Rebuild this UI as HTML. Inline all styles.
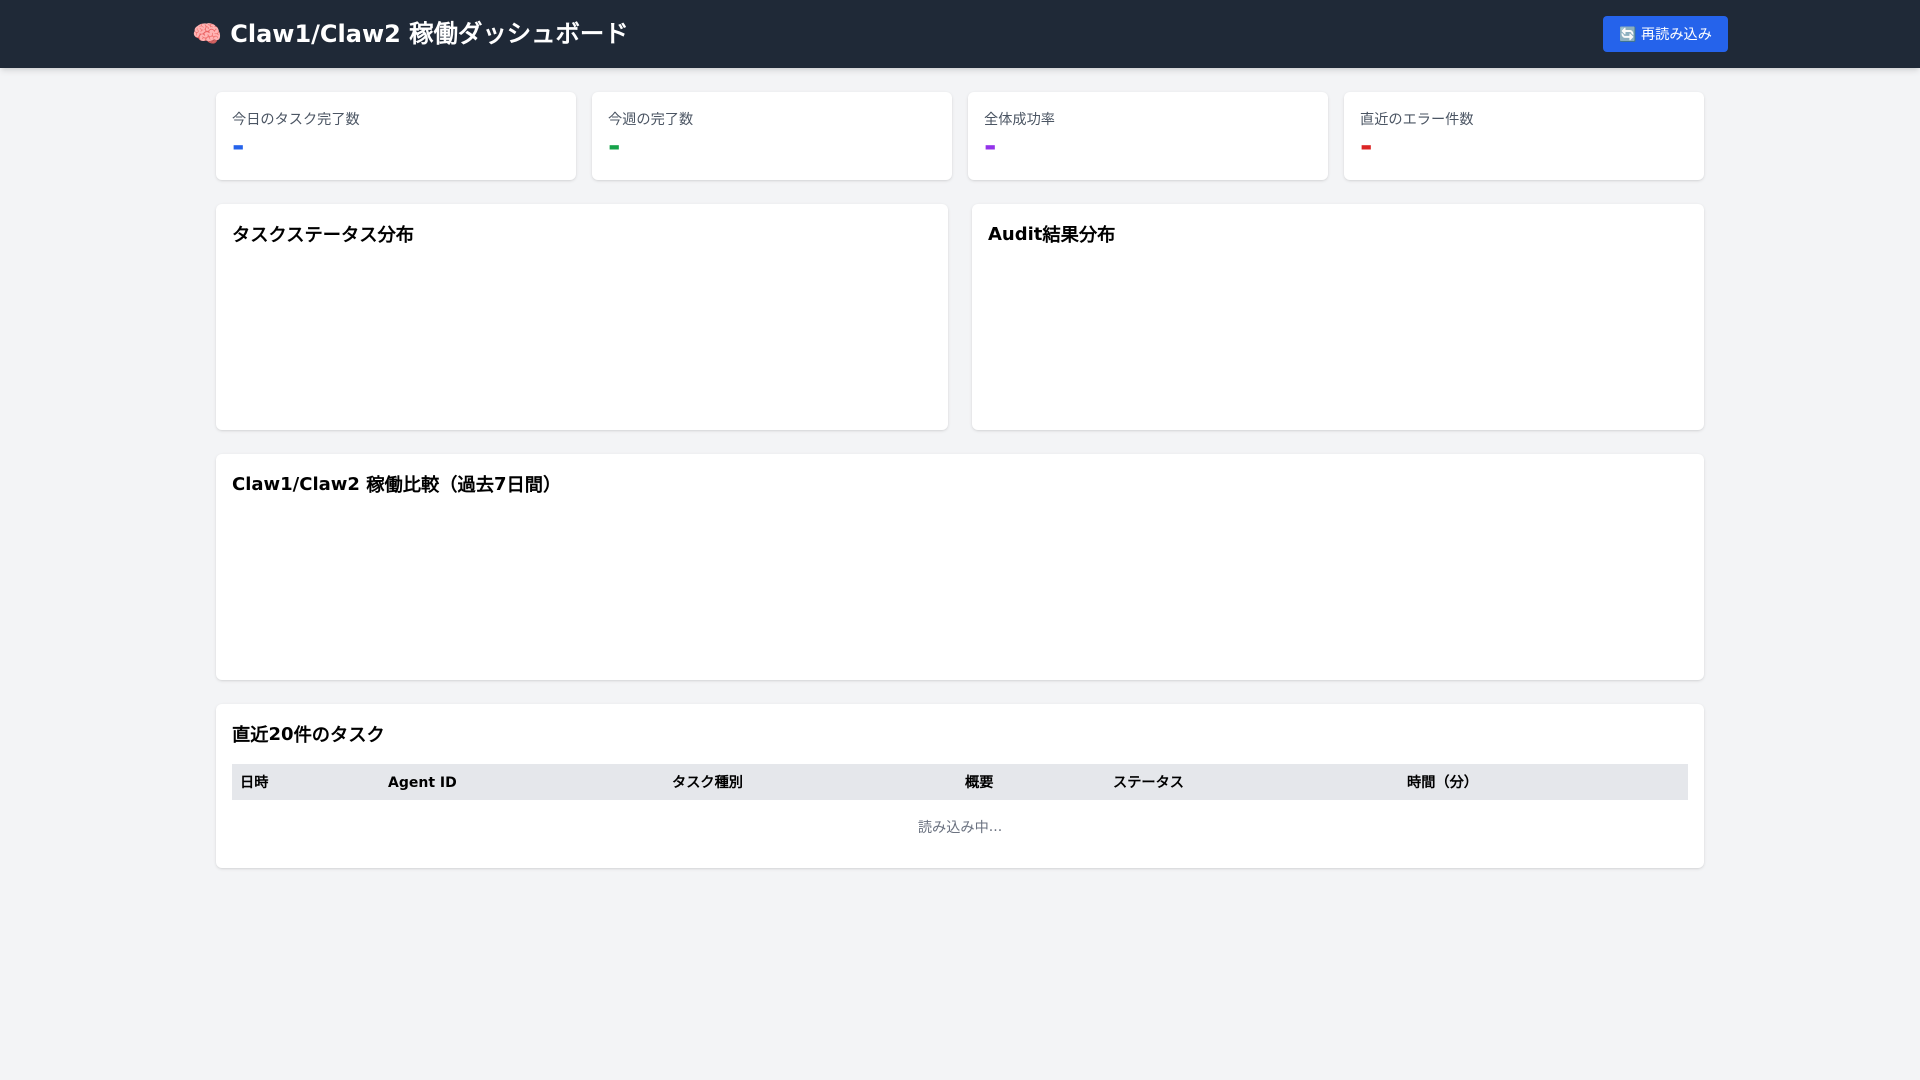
<!DOCTYPE html>
<html lang="ja">
<head>
<meta charset="utf-8">
<title>Claw1/Claw2 稼働ダッシュボード</title>
<style>
*{box-sizing:border-box;margin:0;padding:0}
html,body{width:1920px;height:1080px;overflow:hidden}
body{background:#f3f4f6;font-family:"DejaVu Sans","WenQuanYi Zen Hei",sans-serif;line-height:1.5;color:#000;position:relative}
i{font-style:normal;font-size:1.014em}
h1 i{font-size:1.017em}
p i,h2 i,td i{position:relative;top:1px}
header{position:absolute;left:0;top:0;width:1920px;height:68px;background:#1f2937;color:#fff;box-shadow:0 4px 6px -1px rgba(0,0,0,.1),0 2px 4px -2px rgba(0,0,0,.1)}
h1{position:absolute;left:192px;top:16px;font-size:24px;line-height:36px;font-weight:700;white-space:nowrap}
.btn{position:absolute;left:1603px;top:16px;width:125px;height:36px;background:#2563eb;color:#fff;border-radius:4px;font-size:14px;line-height:36px;padding-top:1px;text-align:center;white-space:nowrap}
.card{position:absolute;background:#fff;border-radius:6px;box-shadow:0 1px 3px 0 rgba(0,0,0,.1),0 1px 2px -1px rgba(0,0,0,.1)}
.stat{top:92px;width:360px;height:88px;padding:16px}
.stat p{font-size:14px;line-height:20px;color:#4b5563;position:relative;top:1px}
.stat b{display:block;font-size:30px;line-height:36px;font-weight:700;position:relative;top:1px}
.panel{padding:16px}
h2{font-size:18px;line-height:28px;font-weight:700;white-space:nowrap;position:relative;top:1px}
table{position:absolute;left:16px;top:60px;width:1456px;border-collapse:collapse;table-layout:fixed;font-size:14px}
th{background:#e5e7eb;height:36px;padding:9px 8px 7px;text-align:left;font-weight:700;line-height:20px}
td{padding:17px 8px 15px;text-align:center;color:#6b7280;line-height:20px}
</style>
</head>
<body>
<header>
<h1>🧠 Claw1/Claw2 <i>稼働ダッシュボード</i></h1>
<div class="btn">🔄 <i>再読み込み</i></div>
</header>
<div class="card stat" style="left:216px"><p><i>今日のタスク完了数</i></p><b style="color:#2563eb">-</b></div>
<div class="card stat" style="left:592px"><p><i>今週の完了数</i></p><b style="color:#16a34a">-</b></div>
<div class="card stat" style="left:968px"><p><i>全体成功率</i></p><b style="color:#9333ea">-</b></div>
<div class="card stat" style="left:1344px"><p><i>直近のエラー件数</i></p><b style="color:#dc2626">-</b></div>
<div class="card panel" style="left:216px;top:204px;width:732px;height:226px"><h2><i>タスクステータス分布</i></h2></div>
<div class="card panel" style="left:972px;top:204px;width:732px;height:226px"><h2>Audit<i>結果分布</i></h2></div>
<div class="card panel" style="left:216px;top:454px;width:1488px;height:226px"><h2>Claw1/Claw2 <i>稼働比較（過去</i>7<i>日間）</i></h2></div>
<div class="card panel" style="left:216px;top:704px;width:1488px;height:164px">
<h2><i>直近</i>20<i>件のタスク</i></h2>
<table>
<colgroup><col style="width:148px"><col style="width:284px"><col style="width:293px"><col style="width:148px"><col style="width:294px"><col style="width:289px"></colgroup>
<thead><tr><th><i>日時</i></th><th>Agent ID</th><th><i>タスク種別</i></th><th><i>概要</i></th><th><i>ステータス</i></th><th><i>時間（分）</i></th></tr></thead>
<tbody><tr><td colspan="6"><i>読み込み中</i>...</td></tr></tbody>
</table>
</div>
</body>
</html>
